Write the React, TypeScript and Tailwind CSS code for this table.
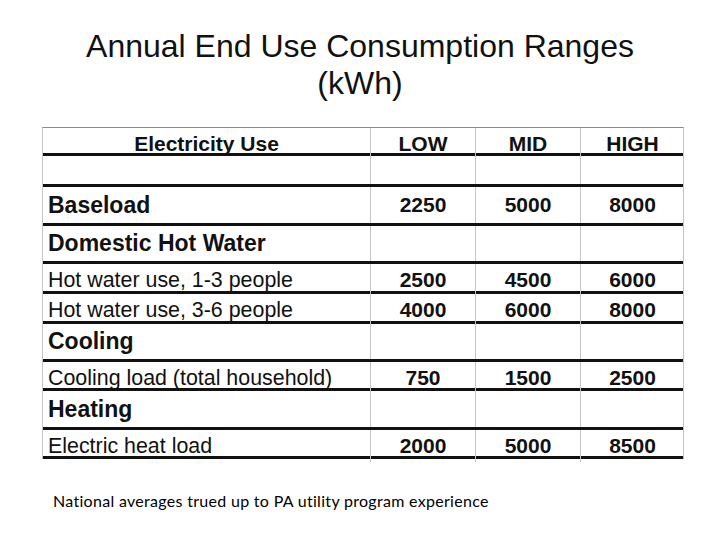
const rows = [
  { label: "", kind: "blank", h: "h-[31px]", vals: ["", "", ""] },
  { label: "Baseload", kind: "cat", h: "h-[39px]", vals: ["2250", "5000", "8000"] },
  { label: "Domestic Hot Water", kind: "cat", h: "h-[38px]", vals: ["", "", ""] },
  { label: "Hot water use, 1-3 people", kind: "item", h: "h-[30px]", vals: ["2500", "4500", "6000"] },
  { label: "Hot water use, 3-6 people", kind: "item", h: "h-[30px]", vals: ["4000", "6000", "8000"] },
  { label: "Cooling", kind: "cat", h: "h-[38px]", vals: ["", "", ""] },
  { label: "Cooling load (total household)", kind: "item", h: "h-[29px]", vals: ["750", "1500", "2500"] },
  { label: "Heating", kind: "cat", h: "h-[39px]", vals: ["", "", ""] },
  { label: "Electric heat load", kind: "item", h: "h-[29px]", vals: ["2000", "5000", "8500"] },
];

const cols = "grid grid-cols-[327px_105px_105px_104px]";

export default function App() {
  return (
    <div className="w-[720px] h-[540px] bg-white text-[#111] overflow-hidden relative"
      style={{ fontFamily: '"Liberation Sans", Arial, sans-serif' }}>
      <h1 className="pt-[28px] text-center text-[32px] leading-[37px] font-normal">
        Annual End Use Consumption Ranges
        <br />
        (kWh)
      </h1>

      <div className="ml-[42px] mt-[25px] w-[642px] border-t border-l border-r border-t-[#8a8a8a] border-l-[#c4c4c4] border-r-[#c4c4c4]">
        <div className={`${cols} h-[28px] border-b-[3px] border-[#111] text-[21px] font-bold`}>
          <div className="flex items-center justify-center">Electricity Use</div>
          <div className="flex items-center justify-center border-l border-[#c4c4c4]">LOW</div>
          <div className="flex items-center justify-center border-l border-[#c4c4c4]">MID</div>
          <div className="flex items-center justify-center border-l border-[#c4c4c4]">HIGH</div>
        </div>
        {rows.map((r, i) => (
          <div key={i} className={`${cols} ${r.h} border-b-[3px] border-[#111]`}>
            <div className={
              r.kind === "cat"
                ? "flex items-center pl-[5px] text-[23px] font-bold"
                : "flex items-center pl-[5px] text-[21.4px] font-normal"
            }>
              {r.label}
            </div>
            {r.vals.map((v, j) => (
              <div key={j} className="flex items-center justify-center border-l border-[#c4c4c4] text-[21px] font-bold">
                {v}
              </div>
            ))}
          </div>
        ))}
      </div>

      <p className="absolute left-[53px] top-[492px] text-[16px] leading-[18px] tracking-[0.3px] text-black"
        style={{ fontFamily: 'Lato, "Open Sans", sans-serif' }}>
        National averages trued up to PA utility program experience
      </p>
    </div>
  );
}
